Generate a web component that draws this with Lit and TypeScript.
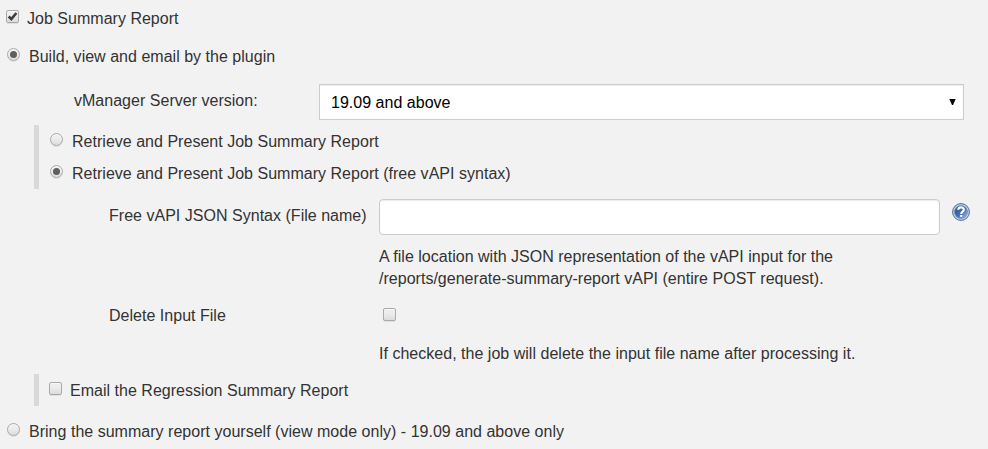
import { LitElement, html, css, svg } from "lit";
import { customElement, property } from "lit/decorators.js";
import { classMap } from "lit/directives/class-map.js";

@customElement("form-toggle")
class FormToggle extends LitElement {
  @property() kind: "radio" | "checkbox" = "checkbox";
  @property({ type: Boolean }) checked = false;

  static styles = css`
    :host { display: block; flex: none; width: 13px; height: 13px; }
    .box {
      box-sizing: border-box; width: 13px; height: 13px;
      display: flex; align-items: center; justify-content: center;
      border: 1px solid #a9a9a9; border-radius: 2px;
      background: linear-gradient(#ededed 38%, #dcdcdc);
      box-shadow: 0 1px 0 rgba(0, 0, 0, 0.08), inset 0 1px 1px rgba(255, 255, 255, 0.75);
    }
    .radio { border-radius: 50%; }
    .dot { width: 7px; height: 7px; border-radius: 50%; background: #5e5e5e; }
    svg { display: block; width: 11px; height: 11px; }
  `;

  render() {
    const radio = this.kind === "radio";
    const mark = radio
      ? html`<div class="dot"></div>`
      : html`<svg viewBox="0 0 11 11">${svg`<path d="M1.7 5.5 4.3 8.1 9.4 2" fill="none" stroke="#3c3c3c" stroke-width="2.6"/>`}</svg>`;
    return html`<div class=${classMap({ box: true, radio })}>${this.checked ? mark : ""}</div>`;
  }
}

@customElement("app-root")
class AppRoot extends LitElement {
  static styles = css`
    :host {
      display: block; box-sizing: border-box; width: 988px; height: 449px; overflow: hidden;
      padding-top: 8px; background: #f2f2f2; color: #333;
      font: 16px/22px "Liberation Sans", Arial, sans-serif; letter-spacing: 0.02px;
    }
    .row { display: flex; align-items: flex-start; white-space: nowrap; }
    .job { padding-left: 6px; gap: 8px; }
    .job form-toggle, .mode form-toggle, .last form-toggle { margin-top: 2px; }
    .mode { padding-left: 7px; gap: 9px; margin-top: 16px; }
    .last { padding-left: 7px; gap: 9px; margin-top: 15px; }
    .last form-toggle { margin-top: 2px; }
    .version { padding-left: 74px; margin-top: 16px; height: 36px; }
    .version .label { width: 245px; padding-top: 6px; }
    .select {
      box-sizing: border-box; width: 645px; height: 36px; padding: 0 7px 0 11px;
      display: flex; align-items: center; justify-content: space-between;
      border: 1px solid #ccc; background: #fff; color: #000;
      box-shadow: inset 0 1px 1px rgba(0, 0, 0, 0.075);
    }
    .select span { padding-top: 2px; }
    .arrow { width: 7px; height: 6px; display: block; }
    .group { margin: 5px 0 0 34px; border-left: 5px solid #d9d9d9; }
    .group .row { height: 26px; padding: 6px 0 0 11px; gap: 9px; }
    .group form-toggle { margin-top: 2px; }
    .email { margin-top: 9px; }
    .email .row { padding-left: 10px; gap: 8px; }
    .field { padding-left: 109px; margin-top: 10px; }
    .field .label { width: 270px; }
    .path .label { padding-top: 6px; }
    .input {
      box-sizing: border-box; width: 561px; height: 36px; border: 1px solid #ccc;
      border-radius: 4px; background: #fff; box-shadow: inset 0 1px 1px rgba(0, 0, 0, 0.075);
    }
    .help { width: 18px; height: 18px; margin: 4px 0 0 12px; display: block; }
    .note { margin: 11px 0 0 379px; }
    .delete { margin-top: 15px; }
    .delete form-toggle { margin: 3px 0 0 4px; }
    .after { margin-top: 16px; }
  `;

  render() {
    return html`
      <div class="row job"><form-toggle checked></form-toggle><span>Job Summary Report</span></div>
      <div class="row mode"><form-toggle kind="radio" checked></form-toggle><span>Build, view and email by the plugin</span></div>
      <div class="row version">
        <span class="label">vManager Server version:</span>
        <div class="select"><span>19.09 and above</span>
          <svg class="arrow" viewBox="0 0 7 6"><path d="M0.3 0H6.7L4 6H3Z" fill="#000"/></svg>
        </div>
      </div>
      <div class="group">
        <div class="row"><form-toggle kind="radio"></form-toggle><span>Retrieve and Present Job Summary Report</span></div>
        <div class="row"><form-toggle kind="radio" checked></form-toggle><span>Retrieve and Present Job Summary Report (free vAPI syntax)</span></div>
      </div>
      <div class="row field path">
        <span class="label">Free vAPI JSON Syntax (File name)</span>
        <div class="input"></div>
        <svg class="help" viewBox="0 0 18 18">
          <defs><linearGradient id="g" x1="0" y1="0" x2="1" y2="1">
            <stop offset="0" stop-color="#2d5794"/><stop offset=".5" stop-color="#426da9"/><stop offset="1" stop-color="#a3bfe0"/>
          </linearGradient></defs>
          <circle cx="9" cy="9" r="8.4" fill="#c3d3e8" stroke="#4d6c9c"/>
          <circle cx="9" cy="9" r="6.5" fill="url(#g)" stroke="#5c80b4" stroke-width=".5"/>
          <path d="M6.3 6.8C6.3 3.6 11.8 3.6 11.8 6.7C11.8 8.7 9.2 8.6 9.2 11M9.2 12V14.1" fill="none" stroke="#fff" stroke-width="2.1"/>
        </svg>
      </div>
      <div class="note">A file location with JSON representation of the vAPI input for the<br>/reports/generate-summary-report vAPI (entire POST request).</div>
      <div class="row field delete"><span class="label">Delete Input File</span><form-toggle></form-toggle></div>
      <div class="note after">If checked, the job will delete the input file name after processing it.</div>
      <div class="group email"><div class="row"><form-toggle></form-toggle><span>Email the Regression Summary Report</span></div></div>
      <div class="row last"><form-toggle kind="radio"></form-toggle><span>Bring the summary report yourself (view mode only) - 19.09 and above only</span></div>
    `;
  }
}
